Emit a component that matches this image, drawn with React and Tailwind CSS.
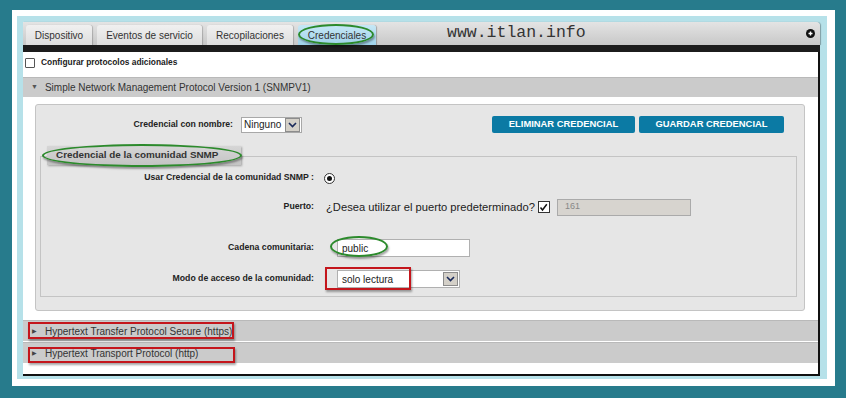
import React from "react";

const font = "font-['Liberation_Sans',Arial,sans-serif]";

function Chevron() {
    return (
        <svg width="9" height="6" viewBox="0 0 9 6">
            <path d="M1 1 L4.5 4.5 L8 1" fill="none" stroke="#1a2a5a" strokeWidth="1.6" />
        </svg>
    );
}

function DropButton() {
    return (
        <div className="w-[15px] h-[14px] bg-[#d4d0c8] border border-[#8c8c8c] flex items-center justify-center">
            <Chevron />
        </div>
    );
}

function Tab({ label, active }) {
    return (
        <div
            className={`h-[20px] flex items-center justify-center rounded-t-[3px] text-[10px] text-[#333] ${
                active
                    ? "bg-gradient-to-b from-[#c6e8f6] to-[#9fd2ea] shadow-[1px_0_1px_rgba(0,0,0,0.25)]"
                    : "bg-gradient-to-b from-[#f0f0f0] to-[#dedede] shadow-[1px_0_1px_rgba(0,0,0,0.2)]"
            }`}
        >
            {label}
        </div>
    );
}

function FormRow({ label, children, className = "" }) {
    return (
        <div className={`flex items-center ${className}`}>
            <div className="w-[274px] text-right text-[8.7px] font-bold text-[#222] pr-[1px]">{label}</div>
            <div className="flex items-center pl-[8px]">{children}</div>
        </div>
    );
}

function CollapsedRow({ label }) {
    return (
        <div className="h-[21px] bg-[#cbcbcb] border-t border-[#b9b9b9] flex items-center pl-[9px] text-[10px] text-[#333]">
            <span className="text-[6px] text-[#444] mr-[8px]">▶</span>
            {label}
        </div>
    );
}

export default function App() {
    return (
        <div className={`relative w-[846px] h-[398px] bg-[#277b8c] pt-[10px] pl-[12px] ${font}`}>
            <div className="w-[823px] h-[376px] bg-white pl-[5px] pt-[6px]">
                <div className="w-[810px] h-[363px] bg-[#b6e1e9] pl-[6px] pt-[6px]">
                    <div className="w-[797px] h-[354px] flex flex-col">
                        {/* tab bar */}
                        <div className="h-[23px] flex items-end gap-[5px] pl-[3px] pr-[5px] rounded-tr-[4px] bg-gradient-to-b from-[#e4e4e4] to-[#c8c8c8] shadow-[1px_0_1px_rgba(0,0,0,0.3)]">
                            <div className="w-[66px]"><Tab label="Dispositivo" /></div>
                            <div className="w-[105px]"><Tab label="Eventos de servicio" /></div>
                            <div className="w-[86px]"><Tab label="Recopilaciones" /></div>
                            <div className="w-[78px]"><Tab label="Credenciales" active /></div>
                            <div className="flex-1 h-full flex items-center pl-[66px]">
                                <span className="font-['Liberation_Mono',monospace] text-[16.5px] text-[#333] leading-none">www.itlan.info</span>
                            </div>
                            <div className="h-full flex items-center">
                                <div className="w-[9px] h-[9px] rounded-full bg-[#111] flex items-center justify-center">
                                    <svg width="5" height="5" viewBox="0 0 5 5">
                                        <path d="M2.5 0.5 V4.5 M0.5 2.5 H4.5" stroke="white" strokeWidth="1.4" />
                                    </svg>
                                </div>
                            </div>
                        </div>
                        <div className="h-[7px] bg-[#1c1c1c]" />

                        {/* body */}
                        <div className="flex-1 bg-white border-r-2 border-b-2 border-[#111] flex flex-col">
                            <div className="h-[21px] flex items-center pl-[2px]">
                                <div className="w-[10px] h-[10px] border border-[#555] rounded-[1px] bg-white" />
                                <span className="ml-[6px] text-[8.4px] font-bold text-[#222]">Configurar protocolos adicionales</span>
                            </div>

                            <div className="mt-[4px] h-[20px] bg-[#cbcbcb] border-t border-[#b9b9b9] flex items-center pl-[8px] text-[10px] text-[#333]">
                                <span className="text-[7px] text-[#555] mr-[7px]">▼</span>
                                Simple Network Management Protocol Version 1 (SNMPV1)
                            </div>

                            {/* outer fieldset */}
                            <div className="mt-[7px] ml-[12px] mr-[13px] h-[207px] bg-[#e6e6e6] border border-[#c4c4c4] rounded-[3px] flex flex-col">
                                <div className="mt-[11px] flex items-center h-[17px]">
                                    <div className="w-[197px] text-right text-[8.7px] font-bold text-[#222]">Credencial con nombre:</div>
                                    <div className="ml-[8px] w-[61px] h-[16px] bg-white border border-[#a8a8a8] flex items-center justify-between pl-[2px] pr-[1px] text-[10px] text-[#222]">
                                        Ninguno
                                        <DropButton />
                                    </div>
                                    <div className="flex-1" />
                                    <div className="flex gap-[4px] mr-[20px]">
                                        <div className="w-[143px] h-[17px] rounded-[2px] bg-[#0b7aa4] text-white text-[9.4px] font-bold flex items-center justify-center">ELIMINAR CREDENCIAL</div>
                                        <div className="w-[145px] h-[17px] rounded-[2px] bg-[#0b7aa4] text-white text-[9.4px] font-bold flex items-center justify-center">GUARDAR CREDENCIAL</div>
                                    </div>
                                </div>

                                {/* inner fieldset */}
                                <div className="mt-[23px] ml-[4px] mr-[7px] h-[141px] border border-[#c4c4c4] flex flex-col">
                                    <div className="-mt-[11px] ml-[6px] w-[194px] h-[19px] bg-gradient-to-b from-[#d6d6d6] to-[#c4c4c4] shadow-[1px_1px_2px_rgba(0,0,0,0.3)] flex items-center pl-[9px] text-[9.9px] font-bold text-[#333]">
                                        Credencial de la comunidad SNMP
                                    </div>
                                    <FormRow label="Usar Credencial de la comunidad SNMP :" className="mt-[5px] h-[16px]">
                                        <div className="ml-[1px] w-[11px] h-[11px] rounded-full border border-[#333] bg-white flex items-center justify-center">
                                            <div className="w-[5px] h-[5px] rounded-full bg-[#111]" />
                                        </div>
                                    </FormRow>
                                    <FormRow label="Puerto:" className="mt-[12px] h-[18px]">
                                        <span className="ml-[3px] text-[11.2px] text-[#222]">¿Desea utilizar el puerto predeterminado?</span>
                                        <div className="ml-[3px] w-[12px] h-[12px] border border-[#333] bg-white flex items-center justify-center">
                                            <svg width="9" height="9" viewBox="0 0 9 9">
                                                <path d="M1.5 4.5 L3.5 7 L7.8 1.2" fill="none" stroke="#111" strokeWidth="1.5" />
                                            </svg>
                                        </div>
                                        <div className="ml-[7px] w-[134px] h-[17px] bg-[#d7d4cf] border border-[#aaa] flex items-center pl-[7px] text-[9px] text-[#888]">161</div>
                                    </FormRow>
                                    <FormRow label="Cadena comunitaria:" className="mt-[23px] h-[18px]">
                                        <div className="ml-[14px] w-[133px] h-[18px] bg-white border border-[#b0b0b0] flex items-center pl-[4px] text-[10px] text-[#222]">public</div>
                                    </FormRow>
                                    <FormRow label="Modo de acceso de la comunidad:" className="mt-[13px] h-[18px]">
                                        <div className="ml-[14px] w-[123px] h-[18px] bg-white border border-[#b0b0b0] flex items-center justify-between pl-[4px] pr-[1px] text-[10px] text-[#222]">
                                            solo lectura
                                            <DropButton />
                                        </div>
                                    </FormRow>
                                </div>
                            </div>

                            <div className="mt-[9px] flex flex-col gap-[1px]">
                                <CollapsedRow label="Hypertext Transfer Protocol Secure (https)" />
                                <CollapsedRow label="Hypertext Transport Protocol (http)" />
                            </div>
                        </div>
                    </div>
                </div>
            </div>

            {/* annotation overlays */}
            <div className="absolute left-[298px] top-[24px] w-[76px] h-[21px] rounded-[50%] border-2 border-[#2c8a2c] shadow-[1px_2px_2px_rgba(0,0,0,0.35)]" />
            <div className="absolute left-[42px] top-[144px] w-[200px] h-[23px] rounded-[50%] border-2 border-[#2c8a2c] shadow-[1px_2px_2px_rgba(0,0,0,0.35)]" />
            <div className="absolute left-[330px] top-[236px] w-[58px] h-[21px] rounded-[50%] border-2 border-[#2c8a2c] shadow-[1px_2px_2px_rgba(0,0,0,0.35)]" />
            <div className="absolute left-[325px] top-[267px] w-[86px] h-[23px] border-2 border-[#c4161c] shadow-[1px_2px_2px_rgba(0,0,0,0.35)]" />
            <div className="absolute left-[28px] top-[322px] w-[206px] h-[17px] border-2 border-[#c4161c] shadow-[1px_2px_2px_rgba(0,0,0,0.35)]" />
            <div className="absolute left-[28px] top-[347px] w-[207px] h-[16px] border-2 border-[#c4161c] shadow-[1px_2px_2px_rgba(0,0,0,0.35)]" />
        </div>
    );
}
